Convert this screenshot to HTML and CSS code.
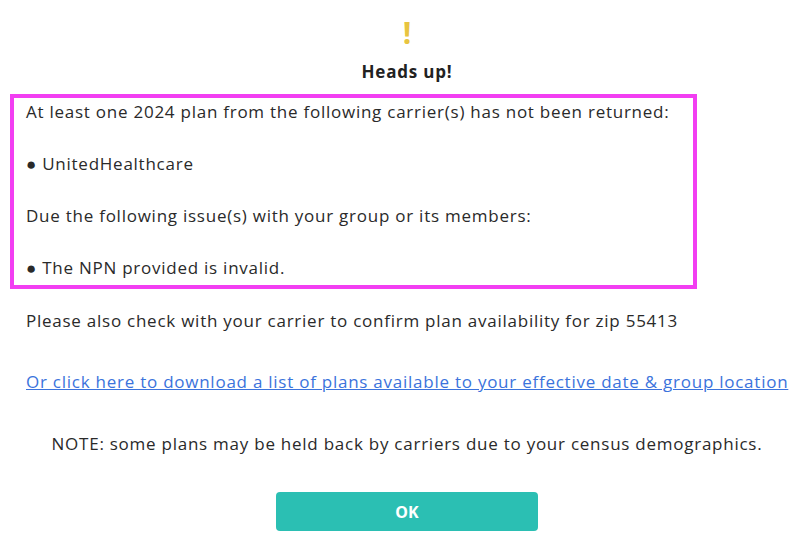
FILE: index.html
```html
<!DOCTYPE html>
<html lang="en">

<head>
    <meta charset="UTF-8">
    <meta name="viewport" content="width=device-width, initial-scale=1.0">
    <title>Heads up</title>
    <link rel="stylesheet" href="styles.css">
</head>

<body>
    <div class="modal">
        <div class="alert-icon">!</div>
        <h2 class="title">Heads up!</h2>

        <div class="highlight">
            <p>At least one 2024 plan from the following carrier(s) has not been returned:</p>
            <p>&#9679; UnitedHealthcare</p>
            <p>Due the following issue(s) with your group or its members:</p>
            <p>&#9679; The NPN provided is invalid.</p>
        </div>

        <p class="check">Please also check with your carrier to confirm plan availability for zip 55413</p>
        <p class="download"><a href="#">Or click here to download a list of plans available to your effective date &amp; group location</a></p>
        <p class="note">NOTE: some plans may be held back by carriers due to your census demographics.</p>

        <div class="actions">
            <button class="ok-btn">OK</button>
        </div>
    </div>
</body>

</html>
```

FILE: styles.css
```css
body {
    margin: 0;
    background-color: #fff;
    font-family: "Open Sans", sans-serif;
    color: #2a2a2a;
}

.modal {
    padding: 16px 23px 0 26px;
}

.alert-icon {
    text-align: center;
    font-size: 30px;
    font-weight: 700;
    line-height: 34px;
    color: #e8c440;
}

.title {
    margin: 9px 0 0;
    text-align: center;
    font-size: 17px;
    font-weight: 700;
    line-height: 26px;
    letter-spacing: 0.8px;
    color: #222;
}

p {
    margin: 0;
    font-size: 17px;
    line-height: 26px;
    letter-spacing: 0.75px;
}

.highlight {
    width: 667px;
    margin: 9px 0 0 -16px;
    padding: 1px 0 4px 12px;
    border: 4px solid #f23ef2;
}

.highlight p + p {
    margin-top: 26px;
}

.check {
    margin-top: 19px;
}

.download {
    margin-top: 35px;
    white-space: nowrap;
}

.download a {
    color: #3b73dc;
}

.note {
    margin-top: 36px;
    text-align: center;
}

.actions {
    display: flex;
    justify-content: center;
    margin-top: 35px;
}

.ok-btn {
    width: 262px;
    height: 39px;
    border: none;
    border-radius: 4px;
    background-color: #2bbfb3;
    color: #fff;
    font-family: "Noto Sans", sans-serif;
    font-size: 16px;
    font-weight: 700;
    cursor: pointer;
}
```
